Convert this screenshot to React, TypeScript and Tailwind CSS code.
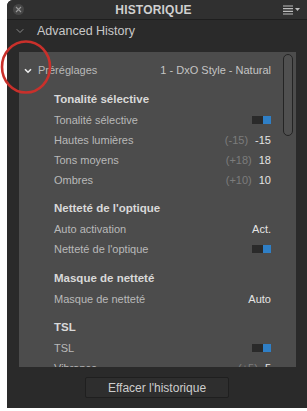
import { ChevronDown } from 'lucide-react';

type Row =
    | { kind: 'header'; label: string }
    | { kind: 'value'; label: string; value: string; prev?: string }
    | { kind: 'toggle'; label: string };

const groups: Row[][] = [
    [
        { kind: 'header', label: 'Tonalité sélective' },
        { kind: 'toggle', label: 'Tonalité sélective' },
        { kind: 'value', label: 'Hautes lumières', prev: '(-15)', value: '-15' },
        { kind: 'value', label: 'Tons moyens', prev: '(+18)', value: '18' },
        { kind: 'value', label: 'Ombres', prev: '(+10)', value: '10' },
    ],
    [
        { kind: 'header', label: "Netteté de l'optique" },
        { kind: 'value', label: 'Auto activation', value: 'Act.' },
        { kind: 'toggle', label: "Netteté de l'optique" },
    ],
    [
        { kind: 'header', label: 'Masque de netteté' },
        { kind: 'value', label: 'Masque de netteté', value: 'Auto' },
    ],
    [
        { kind: 'header', label: 'TSL' },
        { kind: 'toggle', label: 'TSL' },
        { kind: 'value', label: 'Vibrance', prev: '(+5)', value: '5' },
    ],
];

function Toggle() {
    return (
        <div className="flex h-[8px] w-[19px] bg-[#2a2a2a]">
            <div className="flex-1" />
            <div className="w-[8px] bg-[#2f7fc6]" />
        </div>
    );
}

function SettingRow({ row }: { row: Row }) {
    if (row.kind === 'header') {
        return (
            <div className="flex h-5 items-center pl-[35px] text-[11.5px] font-bold text-[#d9d9d9]">
                {row.label}
            </div>
        );
    }
    return (
        <div className="flex h-5 items-center pl-[35px] text-[11px] text-[#b9b9b9]">
            <span className="flex-1">{row.label}</span>
            {row.kind === 'toggle' ? (
                <Toggle />
            ) : (
                <span className="flex items-center gap-[7px]">
                    {row.prev && <span className="text-[#7c7c7c]">{row.prev}</span>}
                    <span className="text-[#e4e4e4]">{row.value}</span>
                </span>
            )}
        </div>
    );
}

export default function App() {
    return (
        <div
            className="relative h-[411px] w-[307px] overflow-hidden bg-white"
            style={{ fontFamily: '"Liberation Sans", Arial, sans-serif' }}
        >
            <div className="ml-[7px] flex h-[408px] flex-col rounded-tl-[6px] bg-[#2a2a2a]">
                {/* Title bar */}
                <div className="flex h-[20px] items-center rounded-tl-[6px] border-b border-[#1e1e1e] bg-[#303030] px-[6px]">
                    <div className="flex h-[11px] w-[11px] items-center justify-center rounded-full bg-[#464646]">
                        <svg width="7" height="7" viewBox="0 0 7 7">
                            <path d="M1 1L6 6M6 1L1 6" stroke="#9a9a9a" strokeWidth="1.1" />
                        </svg>
                    </div>
                    <div className="flex-1 text-center text-[12px] font-bold tracking-[0.2px] text-[#cfcfcf]">
                        HISTORIQUE
                    </div>
                    <svg width="18" height="10" viewBox="0 0 18 10">
                        <path d="M0 1H10M0 3.7H10M0 6.4H10M0 9H10" stroke="#bdbdbd" strokeWidth="1.2" />
                        <path d="M12 3H17L14.5 6Z" fill="#bdbdbd" />
                    </svg>
                </div>

                {/* Section header */}
                <div className="flex h-[22px] items-center pl-[7px] text-[12.5px] text-[#c8c8c8]">
                    <ChevronDown className="h-[12px] w-[12px] text-[#8a8a8a]" strokeWidth={2} />
                    <span className="ml-[11px]">Advanced History</span>
                </div>

                {/* Settings list */}
                <div className="ml-[12px] mr-[11px] mt-[10px] flex h-[315px] overflow-hidden bg-[#4c4c4c]">
                    <div className="flex-1 pt-[8px]">
                        <div className="flex h-5 items-center pl-[5px] text-[11px] text-[#b9b9b9]">
                            <svg width="8" height="6" viewBox="0 0 8 6" className="mt-[1px]">
                                <path d="M1 1.2L4 4.2L7 1.2" fill="none" stroke="#eeeeee" strokeWidth="1.6" />
                            </svg>
                            <span className="ml-[6px] flex-1">Préréglages</span>
                            <span className="text-[#c4c4c4]">1 - DxO Style - Natural</span>
                        </div>
                        {groups.map((group, i) => (
                            <div key={i} className={i % 2 === 0 ? 'mt-[10px]' : 'mt-[9px]'}>
                                {group.map((row, j) => (
                                    <SettingRow key={j} row={row} />
                                ))}
                            </div>
                        ))}
                    </div>
                    <div className="ml-[12px] mr-[3px] w-[10px] pt-[2px]">
                        <div className="h-[82px] rounded-full border border-[#242424] bg-[#505050]" />
                    </div>
                </div>

                {/* Footer */}
                <div className="flex flex-1 items-start justify-center pt-[10px]">
                    <button className="h-[21px] w-[144px] rounded-[2px] border border-[#1f1f1f] bg-[#2e2e2e] text-[12px] leading-none text-[#cdcdcd]">
                        Effacer l'historique
                    </button>
                </div>
            </div>

            {/* Red annotation circle */}
            <svg className="pointer-events-none absolute left-0 top-[40px]" width="54" height="56" viewBox="0 0 54 56">
                <ellipse cx="26" cy="27" rx="24" ry="25.5" fill="none" stroke="#c9302b" strokeWidth="2.6" />
            </svg>
        </div>
    );
}
